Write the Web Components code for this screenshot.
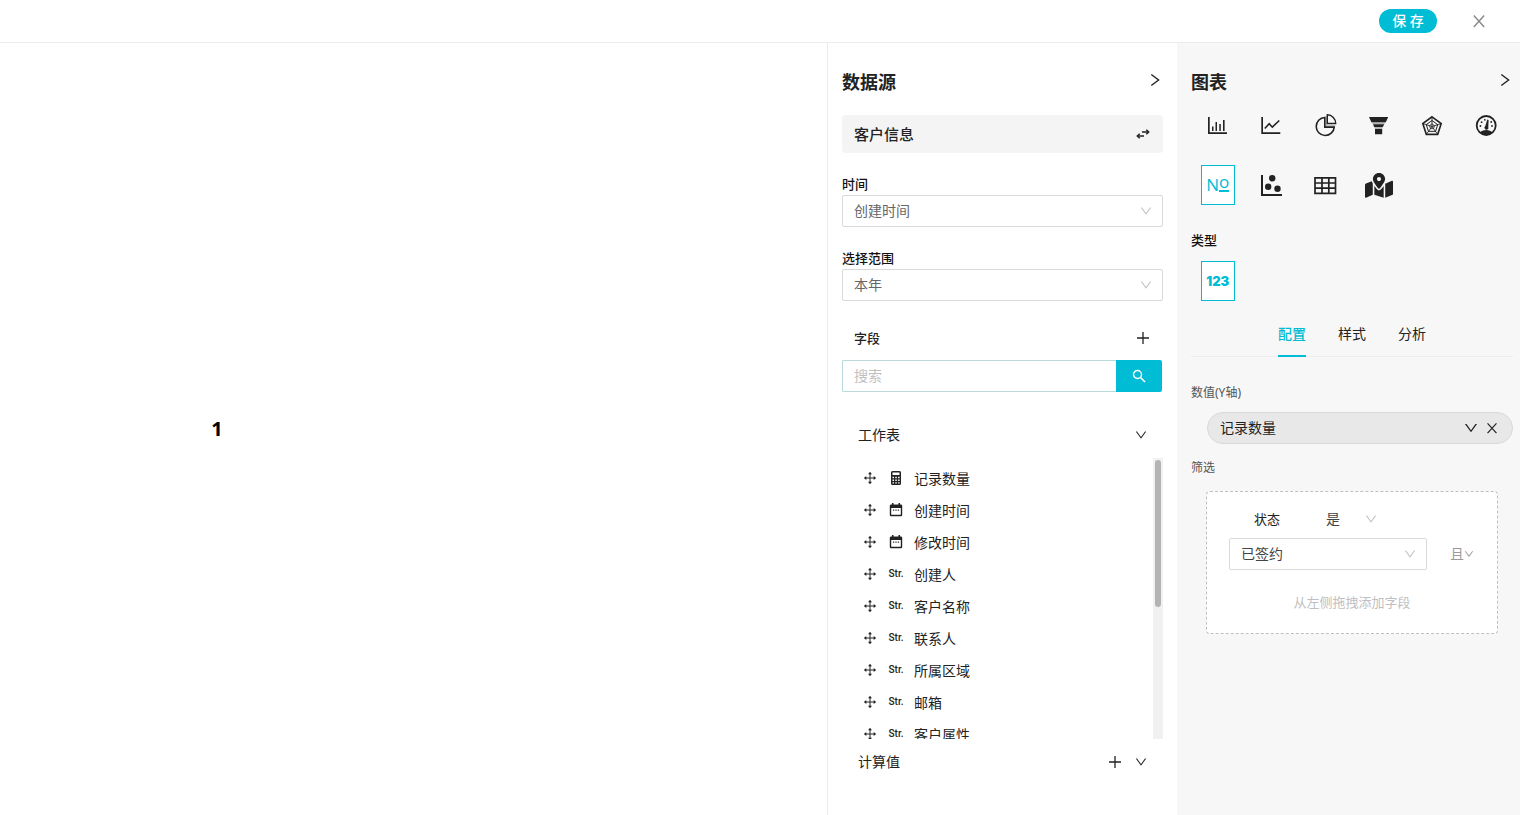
<!DOCTYPE html>
<html lang="zh-CN">
<head>
<meta charset="utf-8">
<meta name="viewport" content="width=device-width, initial-scale=1">
<title>图表编辑</title>
<style>
  html, body { margin: 0; height: 100%; }
  body {
    --accent: #00bcd4; --ink: #222; --line: #d9d9d9; --soft: #f7f7f7;
    font: 14px/20px "Noto Sans", "Noto Sans CJK SC", sans-serif;
    color: var(--ink); background: #fff;
  }
</style>
</head>
<body>
<chart-editor></chart-editor>
<script>
const box = (inner, view = '0 0 28 28') => `<svg viewBox="${view}" aria-hidden="true">${inner}</svg>`;
const ant = d => box(`<path fill="currentColor" d="${d}"/>`, '64 64 896 896');
const pentagon = r => [0, 1, 2, 3, 4].map(i => {
  const a = (i * 72 - 90) * Math.PI / 180;
  return (14 + r * Math.cos(a)).toFixed(2) + ',' + (15.5 + r * Math.sin(a)).toFixed(2);
});
const ICONS = {
  down: ant('M884 256h-75c-5.1 0-9.9 2.5-12.9 6.6L512 654.2 227.9 262.6c-3-4.1-7.8-6.6-12.9-6.6h-75c-6.5 0-10.3 7.4-6.5 12.7l352.6 486.1c12.8 17.6 39 17.6 51.7 0l352.6-486.1c3.9-5.3.1-12.7-6.4-12.7z'),
  right: box('<path d="M4.300 2.500L11.600 8l-7.300 5.500" fill="none" stroke="currentColor" stroke-width="1.400"/>', '0 0 16 16'),
  close: box('<path d="M1.800 1.500l10.400 11.500M12.200 1.500L1.800 13" fill="none" stroke="currentColor" stroke-width="1.400"/>', '0 0 14 14'),
  plus: box('<path d="M7 1v12M1 7h12" stroke="currentColor" stroke-width="1.3"/>', '0 0 14 14'),
  search: box('<circle cx="5.5" cy="5.5" r="4" fill="none" stroke="currentColor" stroke-width="1.4"/><path d="M8.5 8.5l4.500 4.500" stroke="currentColor" stroke-width="1.6"/>', '0 0 14 14'),
  swap: box('<path d="M6 5h6M2 9h6" stroke="currentColor" stroke-width="1.5"/><path d="M10.300 2.700L12.700 5l-2.400 2.300M3.700 6.700L1.300 9l2.400 2.300" fill="none" stroke="currentColor" stroke-width="1.500"/>', '0 0 14 14'),
  move: box('<path d="M7 2v10M2 7h10" stroke="currentColor" stroke-width="1"/><path fill="currentColor" d="M7 .8l2 2.500H5zM7 13.200l2-2.500H5zM.8 7l2.500-2v4zM13.200 7l-2.500-2v4z"/>', '0 0 14 14'),
  calculator: box('<path fill="currentColor" fill-rule="evenodd" d="M3.500 0h7A1.500 1.500 0 0 1 12 1.500v11a1.500 1.500 0 0 1-1.500 1.500h-7A1.500 1.500 0 0 1 2 12.500v-11A1.500 1.500 0 0 1 3.500 0zM3.500 1.500v2.500h7V1.500zM3.500 5.800v1.500H5V5.800zm2.800 0v1.500h1.500V5.800zm2.800 0v1.500h1.500V5.800zM3.500 8.500V10H5V8.500zm2.800 0V10h1.500V8.500zm2.800 0V10h1.500V8.500zM3.500 11.200v1.300H5v-1.300zm2.800 0v1.300h1.500v-1.300zm2.800 0v1.300h1.500v-1.300z"/>', '0 0 14 14'),
  calendar: box('<path fill="currentColor" fill-rule="evenodd" d="M3 0h1.500v1.500h5V0H11v1.500h1A1.200 1.200 0 0 1 13.200 2.700v9.300A1.200 1.200 0 0 1 12 13.200H2A1.200 1.200 0 0 1 .8 12V2.700A1.200 1.200 0 0 1 2 1.500h1zM2.200 5v6.800h9.600V5z"/><path fill="currentColor" d="M4 6.500h1.200v1.200H4zM6.400 6.500h1.200v1.200H6.400zM8.800 6.500H10v1.200H8.800z"/>', '0 0 14 14'),
  bar: box('<path fill="currentColor" d="M4 6h1.700v15.300H23V23H4zM8 15.500h1.500V20H8zM11.500 11H13v9h-1.500zM15.300 13h1.500v7h-1.500zM19 9h1.600v11H19z"/>'),
  line: box('<path fill="currentColor" d="M4.300 6H6v15.300h17.300V23h-19z"/><path d="M7.800 17.500l4.400-4.700 3.100 3.400 7-6.700" fill="none" stroke="currentColor" stroke-width="1.600"/>'),
  pie: box('<path d="M13.800 6.500a9 9 0 1 0 9.400 9.600h-9.400z" fill="none" stroke="currentColor" stroke-width="1.600"/><path d="M15.200 5v9.800h9" fill="none" stroke="currentColor" stroke-width="1.300" opacity=".35"/><path d="M16.300 3.800v8.700h8.400a8.500 8.500 0 0 0-8.400-8.700z" fill="none" stroke="currentColor" stroke-width="1.400"/>'),
  funnel: box('<path fill="currentColor" d="M4 6h19.200l-2.400 5.300H6.400zM8 13.200h11.200l-1.300 2.800H9.200zM10 18h7.200v5.200H10z"/><path fill="currentColor" opacity=".3" d="M6.500 11.300h14.200L19.200 13.200H8zM9.200 16h8.600l-.7 2H10z"/>'),
  radar: box(`<g fill="none" stroke="currentColor"><polygon points="${pentagon(9.7).join(' ')}" stroke-width="1.600"/><polygon points="${pentagon(6).join(' ')}" stroke-width="1"/><polygon points="${pentagon(2.6).join(' ')}" stroke-width=".8"/>${pentagon(9.7).map(p => `<path d="M14 15.500L${p}" stroke-width=".9"/>`).join('')}</g>`),
  gauge: box('<circle cx="14.200" cy="14.500" r="9.500" fill="none" stroke="currentColor" stroke-width="1.800"/><path fill="currentColor" d="M8 21.500c2-3.500 10.400-3.500 12.400 0-3 3.700-9.400 3.700-12.400 0zM15.300 8.500l1.300.4-.3 7a2 2 0 1 1-3-.8z"/><g fill="currentColor"><circle cx="8.400" cy="15" r=".9"/><circle cx="9.600" cy="11.200" r=".9"/><circle cx="12.800" cy="8.800" r=".9"/><circle cx="19.200" cy="11" r=".9"/><circle cx="20" cy="15" r=".9"/></g>'),
  scatter: box('<path fill="currentColor" d="M4 4h2v19h19v2H4z"/><g fill="currentColor"><circle cx="15.200" cy="7.300" r="3.200"/><circle cx="11.200" cy="15.700" r="3.200"/><circle cx="20.500" cy="17.700" r="3.200"/></g>'),
  table: box('<path d="M4 6.800h20.500v15.500H4zM11 6.800v15.500M17.800 6.800v15.500M4 12h20.500M4 17.200h20.500" fill="none" stroke="currentColor" stroke-width="1.700"/>'),
  map: box('<path fill="currentColor" d="M288 0c-69.590 0-126 56.410-126 126 0 56.260 82.350 158.800 113.900 196.020 6.390 7.540 17.820 7.540 24.200 0C331.650 284.800 414 182.260 414 126 414 56.410 357.590 0 288 0zm0 168c-23.200 0-42-18.800-42-42s18.800-42 42-42 42 18.800 42 42-18.800 42-42 42zM20.120 215.950A32.006 32.006 0 0 0 0 245.660v250.320c0 11.320 11.430 19.060 21.940 14.860L160 448V214.920c-8.840-15.980-16.070-31.540-21.250-46.420L20.120 215.950zM288 359.670c-14.070 0-27.380-6.180-36.510-16.960-19.660-23.200-40.570-49.620-59.490-76.720v182l192 64V266c-18.920 27.090-39.820 53.520-59.490 76.720-9.130 10.770-22.440 16.950-36.510 16.950zm266.060-198.510L416 224v288l139.880-55.950A31.996 31.996 0 0 0 576 426.340V176.020c0-11.320-11.430-19.060-21.940-14.860z"/>', '0 -40 576 576')
};

const BASE = `<style>
  *, ::before { box-sizing: border-box; }
  button { font: inherit; color: inherit; background: none; border: 0; padding: 0; margin: 0; cursor: pointer;
    display: inline-flex; align-items: center; justify-content: center; }
  h2, h3, p, ul { margin: 0; padding: 0; }
</style>`;

function element(name, render, ready) {
  customElements.define(name, class extends HTMLElement {
    constructor() { super(); this.attachShadow({ mode: 'open' }); }
    connectedCallback() {
      this.shadowRoot.innerHTML = BASE + render(this);
      if (ready) ready(this.shadowRoot, this);
    }
  });
}

element('ui-icon', el => `<style>
  :host { display: inline-flex; flex: none; width: 12px; height: 12px; }
  svg { display: block; width: 100%; height: 100%; }
</style>${ICONS[el.getAttribute('name')]}`);

/* Drop-down with an optional label above; "plain" drops the frame */
element('select-field', el => {
  const label = el.getAttribute('label');
  return `<style>
  :host { display: block; }
  label { display: block; font-size: 13px; font-weight: 500; line-height: 22px; color: #111; }
  .frame { display: grid; align-items: center; }
  select, ui-icon { grid-area: 1 / 1; }
  select { appearance: none; width: 100%; height: 32px; padding: 0 28px 0 11px; border: 1px solid var(--line);
    border-radius: 2px; background: #fff; font: inherit; color: var(--field-ink, #666); }
  ui-icon { justify-self: end; margin-right: 11px; color: #bfbfbf; pointer-events: none; }
  :host([plain]) select { border-color: transparent; background: transparent; padding: 0; }
  :host([plain]) ui-icon { margin-right: 0; }
</style>
${label ? `<label for="s">${label}</label>` : ''}
<div class="frame"><select id="s"${label ? '' : ` aria-label="${el.getAttribute('name')}"`}><option>${el.getAttribute('value')}</option></select><ui-icon name="down"></ui-icon></div>`;
});

element('panel-title', () => `<style>
  :host { display: flex; align-items: center; justify-content: space-between; height: 28px; }
  h2 { font-size: 18px; line-height: 28px; font-weight: 700; }
  button { width: 16px; height: 24px; align-self: flex-start; }
  ui-icon { width: 16px; height: 16px; }
</style><h2><slot></slot></h2><button aria-label="收起"><ui-icon name="right"></ui-icon></button>`);

element('app-header', () => `<style>
  :host { display: flex; align-items: center; justify-content: flex-end; gap: 34px; height: 43px; padding: 0 33px 0 16px;
    border-bottom: 1px solid #ececec; background: #fff; }
  .save { width: 58px; height: 24px; border-radius: 12px; background: var(--accent); color: #fff; font-weight: 500; }
  .close { width: 16px; height: 24px; color: #888; }
  .close ui-icon { width: 14px; height: 14px; }
</style><button class="save">保 存</button><button class="close" aria-label="关闭"><ui-icon name="close"></ui-icon></button>`);

element('chart-canvas', () => `<style>
  :host { display: flex; align-items: center; background: #fff; }
  output { flex: 0 0 52.5%; text-align: center; font-size: 20px; line-height: 28px; font-weight: 700; color: #000; }
</style><output><slot></slot></output>`);

element('field-row', el => {
  const kind = el.getAttribute('kind');
  return `<style>
  :host { display: flex; align-items: center; height: 32px; gap: 12px; cursor: move; }
  ui-icon { width: 14px; height: 14px; }
  .mark { display: flex; gap: 12px; padding-bottom: 2px; }
  .kind { display: flex; width: 14px; justify-content: center; font: 500 10px/14px Roboto, sans-serif; }
  .name { margin-left: -1px; }
</style><span class="mark"><ui-icon name="move"></ui-icon><span class="kind">${kind === 'string' ? 'Str.' : `<ui-icon name="${kind}"></ui-icon>`}</span></span><span class="name"><slot></slot></span>`;
});

element('scroll-list', () => `<style>
  :host { display: flex; min-height: 0; }
  .view { flex: 1; overflow-y: auto; scrollbar-width: none; padding: 5px 0 0 21px; }
  .track { width: 10px; padding: 2px; background: #f1f1f1; }
  .thumb { height: 53%; border-radius: 3px; background: #b4b4b4; }
</style><div class="view"><slot></slot></div><div class="track"><div class="thumb"></div></div>`,
root => {
  const view = root.querySelector('.view'), thumb = root.querySelector('.thumb');
  view.addEventListener('scroll', () => {
    const share = view.scrollTop / (view.scrollHeight - view.clientHeight);
    thumb.style.marginTop = share * (view.clientHeight - thumb.offsetHeight - 4) + 'px';
  });
});

const FIELDS = [['calculator', '记录数量'], ['calendar', '创建时间'], ['calendar', '修改时间'], ['string', '创建人'],
  ['string', '客户名称'], ['string', '联系人'], ['string', '所属区域'], ['string', '邮箱'], ['string', '客户属性']];

element('data-panel', () => `<style>
  :host { display: flex; flex-direction: column; min-height: 0; padding: 25px 14px 38px; border-left: 1px solid #ececec; background: #fff; }
  .source { display: flex; flex: none; align-items: center; justify-content: space-between; height: 38px; margin: 19px 0 20px; padding: 0 13px 0 12px;
    border-radius: 4px; background: #f4f4f4; font-size: 15px; font-weight: 500; }
  .source ui-icon, .plus ui-icon { width: 14px; height: 14px; }
  select-field { margin-bottom: 20px; }
  .fields { display: flex; align-items: center; justify-content: space-between; height: 34px; padding: 0 13px 0 12px; }
  h3 { font-size: 13px; font-weight: 500; }
  form { display: flex; flex: none; height: 32px; margin: 5px 1px 28px 0; }
  input { flex: 1; min-width: 0; padding: 0 11px; border: 1px solid #b9dadd; border-right: 0; border-radius: 2px 0 0 2px; font: inherit; background: #fff; }
  input::placeholder { color: #bfbfbf; opacity: 1; }
  form button { width: 46px; border-radius: 0 2px 2px 0; background: var(--accent); color: #fff; }
  form ui-icon { width: 14px; height: 14px; }
  .group { display: flex; flex: none; align-items: center; gap: 13px; height: 30px; padding: 0 16px; }
  .group span { flex: 1; }
  scroll-list { flex: 1; margin-top: 8px; }
  .calc { margin-top: 8px; }
</style>
<panel-title>数据源</panel-title>
<div class="source"><span>客户信息</span><button aria-label="切换数据源"><ui-icon name="swap"></ui-icon></button></div>
<select-field label="时间" value="创建时间"></select-field>
<select-field label="选择范围" value="本年"></select-field>
<div class="fields"><h3>字段</h3><button class="plus" aria-label="添加字段"><ui-icon name="plus"></ui-icon></button></div>
<form onsubmit="return false"><input type="text" placeholder="搜索" aria-label="搜索"><button aria-label="搜索"><ui-icon name="search"></ui-icon></button></form>
<div class="group"><span>工作表</span><button aria-label="折叠工作表"><ui-icon name="down"></ui-icon></button></div>
<scroll-list>${FIELDS.map(([k, t]) => `<field-row kind="${k}">${t}</field-row>`).join('')}</scroll-list>
<div class="group calc"><span>计算值</span><button class="plus" aria-label="添加计算值"><ui-icon name="plus"></ui-icon></button><button aria-label="折叠计算值"><ui-icon name="down"></ui-icon></button></div>`);

element('icon-grid', () => `<style>
  :host { display: grid; grid-template-columns: repeat(6, 1fr); row-gap: 20px; justify-items: center; }
</style><slot></slot>`);

element('chart-type', el => `<style>
  :host { display: block; }
  button { width: 34px; height: 40px; border: 1px solid transparent; }
  ui-icon { width: 28px; height: 28px; }
  :host([selected]) button { border-color: var(--accent); background: #fff; color: var(--accent); font: 500 17px/20px "Open Sans", sans-serif; }
  :host([bold]) button { font: 900 13px/24px Inter, sans-serif; }
</style><button aria-label="${el.getAttribute('label')}">${el.hasAttribute('icon') ? `<ui-icon name="${el.getAttribute('icon')}"></ui-icon>` : '<slot></slot>'}</button>`);

/* The numero sign: a capital N beside a raised, underlined o */
element('numero-sign', () => `<style>
  :host { display: flex; align-items: flex-start; height: 20px; }
  .o { height: 17px; line-height: 14px; border-bottom: 2px solid; }
</style><span>N</span><span class="o">o</span>`);

element('tab-bar', () => `<style>
  :host { display: flex; justify-content: center; gap: 32px; height: 46px; border-bottom: 1px solid #ececec; }
  button { height: 46px; padding-top: 2px; border-bottom: 2px solid transparent; color: #222; }
  [aria-selected=true] { color: var(--accent); border-color: var(--accent); font-weight: 500; }
</style><button role="tab" aria-selected="true">配置</button><button role="tab" aria-selected="false">样式</button><button role="tab" aria-selected="false">分析</button>`);

element('value-pill', () => `<style>
  :host { display: flex; align-items: center; gap: 8px; height: 32px; padding: 0 14px 0 12px; border: 1px solid var(--line);
    border-radius: 16px; background: #e8e8e8; box-sizing: border-box; }
  span { flex: 1; }
  button { width: 12px; height: 24px; }
  .more { width: 14px; }
  .more ui-icon { width: 14px; height: 14px; }
</style><span><slot></slot></span><button class="more" aria-label="展开"><ui-icon name="down"></ui-icon></button><button aria-label="移除"><ui-icon name="close"></ui-icon></button>`);

element('filter-box', () => `<style>
  :host { display: block; box-sizing: border-box; padding: 11px 22px 21px; border: 1px dashed #bfbfbf; border-radius: 4px; background: #fff; }
  .rule, .value { display: flex; align-items: center; }
  .rule { height: 32px; padding-left: 25px; }
  .rule span { width: 71px; font-size: 13px; }
  .rule select-field { width: 52px; --field-ink: #444; }
  .value { margin-top: 3px; padding-right: 1px; gap: 23px; }
  .value select-field { flex: 1; --field-ink: #444; }
  .value button { color: #999; }
  .value button ui-icon { width: 10px; height: 10px; }
  p { margin-top: 22px; text-align: center; font-size: 13px; color: #bfbfbf; }
</style>
<div class="rule"><span>状态</span><select-field plain name="条件" value="是"></select-field></div>
<div class="value"><select-field name="状态值" value="已签约"></select-field><button>且<ui-icon name="down"></ui-icon></button></div>
<p>从左侧拖拽添加字段</p>`);

element('chart-panel', () => `<style>
  :host { display: block; padding: 25px 7px 20px 14px; background: var(--soft); }
  icon-grid { margin-top: 9px; }
  h3 { margin: 25px 0 11px; font-size: 13px; line-height: 20px; font-weight: 500; color: #111; }
  h3 + icon-grid { margin-top: 0; }
  tab-bar { margin: 10px 0 26px; }
  p { font-size: 12px; color: #555; }
  value-pill { margin: 9px 0 14px 16px; }
  filter-box { margin: 13px 15px 0; }
</style>
<panel-title>图表</panel-title>
<icon-grid>
  <chart-type icon="bar" label="柱状图"></chart-type><chart-type icon="line" label="折线图"></chart-type>
  <chart-type icon="pie" label="饼图"></chart-type><chart-type icon="funnel" label="漏斗图"></chart-type>
  <chart-type icon="radar" label="雷达图"></chart-type><chart-type icon="gauge" label="仪表盘"></chart-type>
  <chart-type selected label="数值"><numero-sign></numero-sign></chart-type><chart-type icon="scatter" label="散点图"></chart-type>
  <chart-type icon="table" label="表格"></chart-type><chart-type icon="map" label="地图"></chart-type>
</icon-grid>
<h3>类型</h3>
<icon-grid><chart-type selected bold label="数字">123</chart-type></icon-grid>
<tab-bar role="tablist"></tab-bar>
<p>数值(Y轴)</p>
<value-pill>记录数量</value-pill>
<p>筛选</p>
<filter-box></filter-box>`);

element('chart-editor', () => `<style>
  :host { display: flex; flex-direction: column; height: 100vh; min-height: 640px; }
  app-header { flex: none; box-sizing: border-box; }
  main { flex: 1; display: grid; grid-template-columns: minmax(0, 1fr) 350px 343px; min-height: 0; }
  data-panel, chart-panel { box-sizing: border-box; }
</style>
<app-header></app-header>
<main><chart-canvas>1</chart-canvas><data-panel></data-panel><chart-panel></chart-panel></main>`);
</script>
</body>
</html>
